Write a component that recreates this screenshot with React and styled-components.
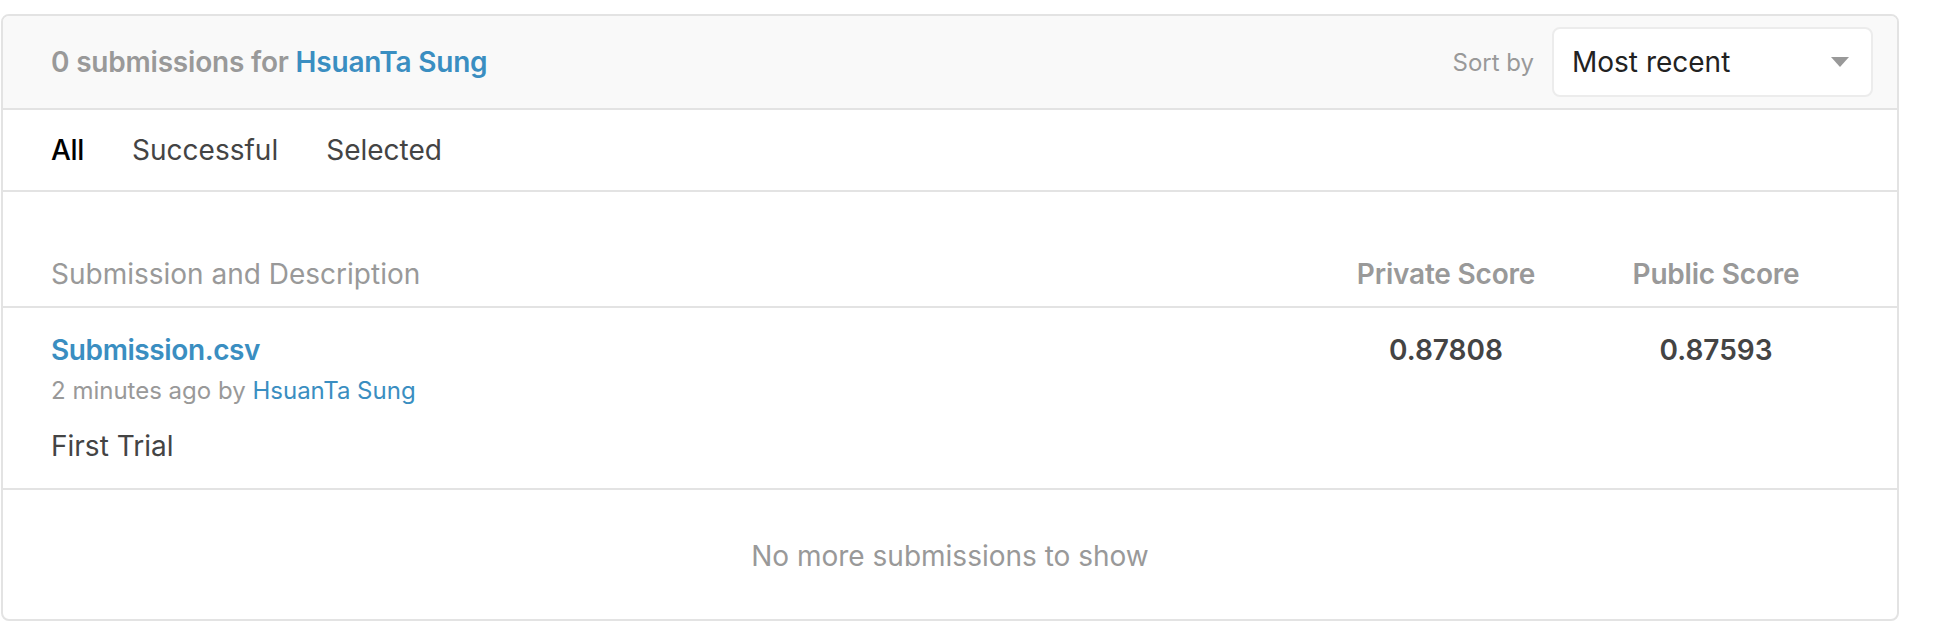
import React from 'react';
import styled, { createGlobalStyle } from 'styled-components';

const GlobalStyle = createGlobalStyle`
  body {
    margin: 0;
    background: #ffffff;
    font-family: Inter, "Noto Sans", sans-serif;
  }
`;

const colors = {
  border: '#e3e3e3',
  grey: '#999999',
  text: '#444444',
  blue: '#3a8ec1',
  headerBg: '#f9f9f9',
};

const submission = {
  file: 'Submission.csv',
  when: '2 minutes ago',
  author: 'HsuanTa Sung',
  description: 'First Trial',
  privateScore: '0.87808',
  publicScore: '0.87593',
};

const tabs = ['All', 'Successful', 'Selected'];

const Page = styled.div`
  padding: 14px 0 0 1px;
`;

const Card = styled.div`
  width: 1898px;
  box-sizing: border-box;
  border: 2px solid ${colors.border};
  border-radius: 8px;
  overflow: hidden;
  background: #fff;
`;

const Header = styled.div`
  display: flex;
  align-items: center;
  justify-content: space-between;
  height: 92px;
  padding: 0 24px 0 48px;
  background: ${colors.headerBg};
  border-bottom: 2px solid ${colors.border};
`;

const Title = styled.h2`
  margin: 0;
  font-size: 28px;
  font-weight: 600;
  letter-spacing: -0.2px;
  color: ${colors.grey};
`;

const Link = styled.a`
  color: ${colors.blue};
  text-decoration: none;
  font-weight: ${(p) => (p.$bold ? 600 : 'inherit')};
  letter-spacing: ${(p) => (p.$bold ? '-0.4px' : 'inherit')};
`;

const SortGroup = styled.div`
  display: flex;
  align-items: center;
  gap: 18px;
`;

const SortLabel = styled.span`
  font-size: 24px;
  color: ${colors.grey};
`;

const Select = styled.div`
  display: flex;
  align-items: center;
  justify-content: space-between;
  width: 321px;
  height: 70px;
  box-sizing: border-box;
  padding: 0 22px 0 18px;
  background: #fff;
  border: 2px solid #ececec;
  border-radius: 8px;
  font-size: 28px;
  color: #222;
`;

const Caret = styled.span`
  width: 0;
  height: 0;
  border-left: 9px solid transparent;
  border-right: 9px solid transparent;
  border-top: 10px solid #999;
`;

const TabBar = styled.div`
  display: flex;
  align-items: center;
  gap: 48px;
  height: 80px;
  padding: 0 48px;
  border-bottom: 2px solid ${colors.border};
`;

const Tab = styled.span`
  font-size: 28px;
  font-weight: ${(p) => (p.$active ? 500 : 400)};
  letter-spacing: ${(p) => (p.$active ? '-0.3px' : '0')};
  color: ${(p) => (p.$active ? '#000' : colors.text)};
`;

const Grid = styled.div`
  display: grid;
  grid-template-columns: 1fr 270px 270px;
  padding: 0 46px 0 48px;
  border-bottom: 2px solid ${colors.border};
`;

const HeadRow = styled(Grid)`
  padding-top: 62px;
  padding-bottom: 12px;
  line-height: 40px;
`;

const HeadCell = styled.div`
  font-size: 28px;
  color: ${colors.grey};
  font-weight: ${(p) => (p.$score ? 600 : 400)};
  letter-spacing: ${(p) => (p.$score ? '-0.2px' : '0')};
  text-align: ${(p) => (p.$score ? 'center' : 'left')};
`;

const Row = styled(Grid)`
  padding-top: 22px;
  padding-bottom: 22px;
`;

const FileName = styled.div`
  font-size: 28px;
  line-height: 40px;
`;

const Meta = styled.div`
  margin-top: 5px;
  font-size: 24px;
  line-height: 32px;
  color: ${colors.grey};
`;

const Description = styled.div`
  margin-top: 19px;
  font-size: 28px;
  line-height: 40px;
  color: ${colors.text};
`;

const Score = styled.div`
  font-size: 28px;
  line-height: 40px;
  font-weight: 600;
  color: ${colors.text};
  text-align: center;
`;

const Footer = styled.div`
  padding: 46px 0 43px;
  font-size: 28px;
  line-height: 40px;
  color: ${colors.grey};
  text-align: center;
`;

const App = () => {
  return (
    <Page>
      <GlobalStyle />
      <Card>
        <Header>
          <Title>
            0 submissions for <Link href="#">{submission.author}</Link>
          </Title>
          <SortGroup>
            <SortLabel>Sort by</SortLabel>
            <Select>
              Most recent
              <Caret />
            </Select>
          </SortGroup>
        </Header>
        <TabBar>
          {tabs.map((t) => (
            <Tab key={t} $active={t === 'All'}>
              {t}
            </Tab>
          ))}
        </TabBar>
        <HeadRow>
          <HeadCell>Submission and Description</HeadCell>
          <HeadCell $score>Private Score</HeadCell>
          <HeadCell $score>Public Score</HeadCell>
        </HeadRow>
        <Row>
          <div>
            <FileName>
              <Link href="#" $bold>
                {submission.file}
              </Link>
            </FileName>
            <Meta>
              {submission.when} by <Link href="#">{submission.author}</Link>
            </Meta>
            <Description>{submission.description}</Description>
          </div>
          <Score>{submission.privateScore}</Score>
          <Score>{submission.publicScore}</Score>
        </Row>
        <Footer>No more submissions to show</Footer>
      </Card>
    </Page>
  );
};

export default App;
